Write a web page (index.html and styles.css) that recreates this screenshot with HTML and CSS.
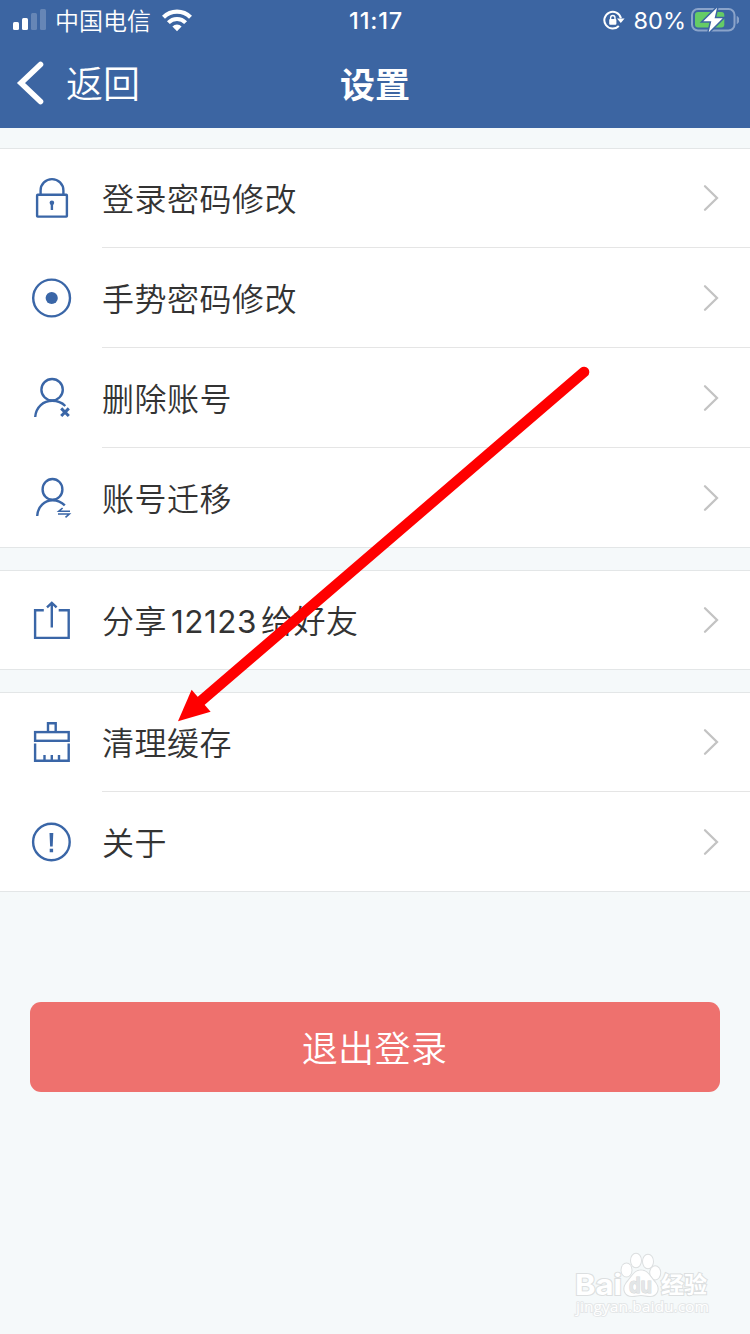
FILE: index.html
```html
<!DOCTYPE html>
<html lang="zh-CN">
<head>
<meta charset="utf-8">
<title>设置</title>
<link rel="stylesheet" href="styles.css">
</head>
<body>
<div class="screen">
  <header class="header">
    <div class="status">
      <div class="status-left">
        <svg class="signal" width="34" height="22" viewBox="0 0 34 22" fill="#fff">
          <rect x="0" y="13" width="6" height="8" rx="1.5"/>
          <rect x="9" y="9" width="6" height="12" rx="1.5"/>
          <rect x="18" y="4" width="6" height="17" rx="1.5" opacity=".22"/>
          <rect x="27" y="0" width="6" height="21" rx="1.5" opacity=".22"/>
        </svg>
        <span class="carrier">中国电信</span>
        <svg class="wifi" width="30" height="23" viewBox="0 0 30 23" fill="none" stroke="#fff">
          <path d="M1.5 8.2A19.2 19.2 0 0 1 28.5 8.2" stroke-width="4.2"/>
          <path d="M6.4 13.7A12 12 0 0 1 23.6 13.7" stroke-width="4"/>
          <path d="M10.4 17.4A6.500 6.500 0 0 1 19.6 17.4L15 22.200Z" fill="#fff" stroke="none"/>
        </svg>
      </div>
      <span class="time">11:17</span>
      <div class="status-right">
        <svg class="rotation" width="22" height="20" viewBox="0 0 22 20">
          <path d="M15.8 16A8.400 8.400 0 1 1 17.900 8.200" fill="none" stroke="#fff" stroke-width="2"/>
          <path d="M14 8.6H21.6L17.8 13Z" fill="#fff"/>
          <rect x="6.2" y="9" width="7.2" height="5.8" rx="1" fill="#fff"/>
          <path d="M7.6 9.4V7.7a2.2 2.2 0 0 1 4.4 0V9.4" fill="none" stroke="#fff" stroke-width="1.4"/>
        </svg>
        <span class="percent">80%</span>
        <svg class="battery" width="48" height="26" viewBox="0 0 48 26">
          <rect x="1" y="2" width="42.5" height="21.5" rx="6" fill="none" stroke="#8ba4ca" stroke-width="2"/>
          <path d="M46.2 9.5a4.500 4.500 0 0 1 0 7Z" fill="#8ba4ca" stroke="#8ba4ca"/>
          <rect x="4" y="5" width="29.3" height="15.600" rx="3" fill="#65cc66"/>
          <path d="M26 .8L12.300 14.300H20.300L17.700 25.200L31.700 11.200H23.600Z" fill="#fff" stroke="#3c65a2" stroke-width="3" paint-order="stroke"/>
        </svg>
      </div>
    </div>
    <div class="navbar">
      <div class="back">
        <svg width="48" height="48" viewBox="0 0 48 48" fill="none" stroke="#fff" stroke-width="5.6" stroke-linecap="round"><path d="M41 5.500L21.500 24L41 42.500" transform="translate(-.5 0)"/></svg>
        <span>返回</span>
      </div>
      <h1 class="title">设置</h1>
      <div class="nav-end"></div>
    </div>
  </header>

  <main class="content">
    <section class="group">
      <div class="row">
        <svg class="icon" viewBox="0 0 102 99"><rect x="37.1" y="46.8" width="29.8" height="21.8" rx=".6"/><path d="M40.6 46V42.5a11.4 11.4 0 0 1 22.8 0V46M51.9 55V62"/><circle class="solid" cx="51.9" cy="54.7" r="2.3"/></svg>
        <div class="cell"><span class="label">登录密码修改</span><svg class="chevron" viewBox="0 0 16 28"><path d="M2 2.2L14 14L2 25.8"/></svg></div>
      </div>
      <div class="row">
        <svg class="icon" viewBox="0 0 102 99"><circle cx="51.6" cy="50" r="18.4"/><circle class="solid" cx="51.7" cy="50" r="6.1"/></svg>
        <div class="cell"><span class="label">手势密码修改</span><svg class="chevron" viewBox="0 0 16 28"><path d="M2 2.2L14 14L2 25.8"/></svg></div>
      </div>
      <div class="row">
        <svg class="icon" viewBox="0 0 102 99"><circle cx="52.1" cy="41.7" r="10.7"/><path d="M35.2 69C36 59 43.5 52.8 52.2 52.8C57.5 52.8 61.8 54.5 65.3 58"/><path class="thick" d="M61.2 60.4L68.8 68M68.8 60.4L61.2 68"/></svg>
        <div class="cell"><span class="label">删除账号</span><svg class="chevron" viewBox="0 0 16 28"><path d="M2 2.2L14 14L2 25.8"/></svg></div>
      </div>
      <div class="row">
        <svg class="icon" viewBox="0 0 102 99"><ellipse cx="52.5" cy="41.4" rx="9.9" ry="10.4"/><path d="M37.2 68C37.8 58.5 44.5 52.2 52.6 52.2C57.5 52.2 61.5 54 64.8 57.4"/><path class="thin" d="M70 63.3H58.8L62.6 60M58 66H69.3L65.5 69.4"/></svg>
        <div class="cell"><span class="label">账号迁移</span><svg class="chevron" viewBox="0 0 16 28"><path d="M2 2.2L14 14L2 25.8"/></svg></div>
      </div>
    </section>

    <section class="group">
      <div class="row">
        <svg class="icon" viewBox="0 0 102 99"><path d="M43.8 40.3H35.1V67.9H68.7V40.3H58.7M51.8 57.4V33M47 37.4L51.8 32.8L56.6 37.4"/></svg>
        <div class="cell"><span class="label">分享<span class="digits">12123</span>给好友</span><svg class="chevron" viewBox="0 0 16 28"><path d="M2 2.2L14 14L2 25.8"/></svg></div>
      </div>
    </section>

    <section class="group">
      <div class="row">
        <svg class="icon" viewBox="0 0 102 99"><path d="M48 40V31.2H55.7V40"/><rect x="35.1" y="40.1" width="33.6" height="8.7"/><path d="M35.1 51.4V68.8H68.7V51.4M44.5 63V68.8M51.8 63V68.8M59 63V68.8"/></svg>
        <div class="cell"><span class="label">清理缓存</span><svg class="chevron" viewBox="0 0 16 28"><path d="M2 2.2L14 14L2 25.8"/></svg></div>
      </div>
      <div class="row">
        <svg class="icon" viewBox="0 0 102 99"><circle cx="51.4" cy="50" r="18.3"/><path class="solid" d="M49.5 41H53.3L52.7 54.6H50.1ZM49.7 56.7H53.1V60.3H49.7Z"/></svg>
        <div class="cell"><span class="label">关于</span><svg class="chevron" viewBox="0 0 16 28"><path d="M2 2.2L14 14L2 25.8"/></svg></div>
      </div>
    </section>

    <button class="logout" type="button">退出登录</button>
  </main>

  <svg class="pointer" width="420" height="364" viewBox="174 362 420 364">
    <path d="M584 372L201 701" stroke="#f00" stroke-width="10.6" stroke-linecap="round"/>
    <path d="M178 721.3L191.6 689.8L210.6 711.7Z" fill="#f00"/>
  </svg>

  <svg class="watermark" width="150" height="74" viewBox="570 1248 150 74">
    <g class="mark">
      <text x="575" y="1294.500" font-size="29" font-weight="700" textLength="47" lengthAdjust="spacingAndGlyphs">Bai</text>
      <ellipse cx="626.5" cy="1270" rx="5" ry="6.6"/>
      <ellipse cx="636" cy="1260.5" rx="5" ry="6.8"/>
      <ellipse cx="648" cy="1261.5" rx="5" ry="6.8"/>
      <ellipse cx="655.2" cy="1272.8" rx="5" ry="6.6"/>
      <path d="M641 1270.5C648 1270.5 650 1277 655.5 1283C660 1289 657 1296 650 1296C646 1296 644 1295 641 1295C638 1295 636 1296 632 1296C625 1296 622 1289 626.5 1283C632 1277 634 1270.5 641 1270.5Z"/>
      <text class="du" x="629" y="1293" font-size="21" font-weight="700" textLength="23" lengthAdjust="spacingAndGlyphs">du</text>
      <text class="zh" x="661" y="1293" font-size="23" font-weight="700" textLength="46">经验</text>
      <text class="site" x="576" y="1312" font-size="14" textLength="133" lengthAdjust="spacingAndGlyphs">jingyan.baidu.com</text>
    </g>
  </svg>
</div>
</body>
</html>
```
FILE: styles.css
```css
* { box-sizing: border-box; }

body {
  margin: 0;
  font-family: Inter, "Noto Sans CJK SC", sans-serif;
}

.screen {
  position: relative;
  width: 750px;
  height: 1334px;
  overflow: hidden;
  background: #f5f9fa;
  color: #333;
}

svg { display: block; flex: none; }

.header {
  height: 128px;
  background: #3c65a2;
  color: #fff;
}

.status {
  display: grid;
  grid-template-columns: 1fr auto 1fr;
  align-items: center;
  height: 40px;
  padding: 0 11px 0 13px;
}

.status-left,
.status-right { display: flex; align-items: center; }
.status-right { justify-content: flex-end; }

.carrier {
  margin: 0 11px 0 8px;
  padding-top: 3px;
  font-size: 24px;
  font-weight: 350;
  line-height: 37px;
}

.time {
  padding-top: 1px;
  font-size: 23.5px;
  font-weight: 500;
  letter-spacing: 0.8px;
}

.percent {
  margin: 0 5px 0 9px;
  padding-top: 1px;
  font-size: 23.5px;
}

.navbar {
  display: grid;
  grid-template-columns: 1fr auto 1fr;
  align-items: center;
  height: 86px;
}

.back {
  display: flex;
  align-items: center;
  gap: 18px;
  font-size: 37px;
  font-weight: 350;
}

.back span { padding-bottom: 2px; }

.title {
  margin: 0;
  padding-bottom: 2px;
  font-size: 35px;
  font-weight: 700;
}

.content {
  display: flex;
  flex-direction: column;
  gap: 22px;
  padding-top: 20px;
}

.group {
  background: #fff;
  box-shadow: inset 0 1px #e3e6e7;
}

.row {
  display: flex;
  height: 100px;
}

.row:last-child { border-bottom: 1px solid #e3e6e7; }

.icon {
  width: 102px;
  height: 99px;
  fill: none;
  stroke: #3a66a7;
  stroke-width: 2.4;
}

.icon .solid { fill: #3a66a7; stroke: none; }
.icon .thick { stroke-width: 3; }
.icon .thin { stroke-width: 1.6; }

.cell {
  display: flex;
  flex: 1;
  align-items: center;
  justify-content: space-between;
  padding-right: 31px;
  border-bottom: 1px solid #e5e5e5;
  font-size: 32px;
  font-weight: 350;
  letter-spacing: 0.5px;
}

.label { padding-bottom: 2px; }

.row:last-child .cell { border-bottom: 0; }

.digits {
  margin: 0 4px;
  font-size: 31.5px;
  font-weight: 400;
}

.chevron {
  width: 16px;
  height: 28px;
  fill: none;
  stroke: #c3c3c3;
  stroke-width: 2.3;
  stroke-linecap: round;
}

.logout {
  height: 90px;
  margin: 88px 30px 0;
  padding: 0 1px 2px 0;
  border: 0;
  border-radius: 11px;
  background: #ee716e;
  color: #fff;
  font: 350 36px Inter, "Noto Sans CJK SC", sans-serif;
  letter-spacing: 0.4px;
}

.pointer {
  position: absolute;
  left: 174px;
  top: 362px;
}

.watermark {
  position: absolute;
  left: 570px;
  top: 1248px;
}

.mark {
  fill: #fff;
  stroke: #dcdfe0;
  stroke-width: 2;
  paint-order: stroke;
  font-family: Inter, "Noto Sans CJK SC", sans-serif;
}

.mark .du { fill: #e3e6e7; stroke: #d6d9da; stroke-width: 1; }
.mark .site {
  stroke: #e4e7e8;
  stroke-width: 1.8;
  font-family: "Open Sans", sans-serif;
}
```
